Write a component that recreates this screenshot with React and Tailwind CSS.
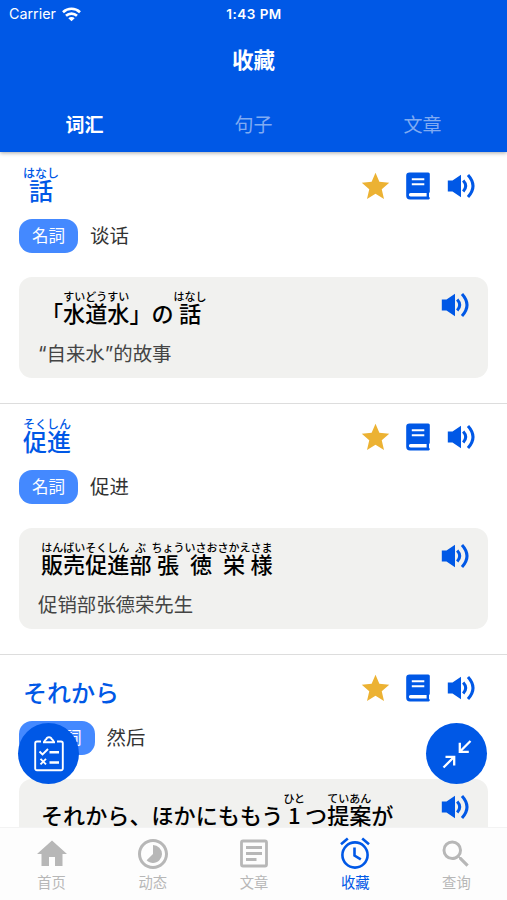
import React, { useState } from "react";
import { MdHome, MdTimelapse, MdSearch, MdStar } from "react-icons/md";

const words = [
    {
        id: 1,
        title: [{ text: "話", ruby: "はなし" }],
        type: "名詞",
        meaning: "谈话",
        example: [
            { text: "「" },
            { text: "水道水", ruby: "すいどうすい" },
            { text: "」の" },
            { text: "話", ruby: "はなし" },
        ],
        translation: "“自来水”的故事",
    },
    {
        id: 2,
        title: [{ text: "促進", ruby: "そくしん" }],
        type: "名詞",
        meaning: "促进",
        example: [
            { text: "販売促進", ruby: "はんばいそくしん" },
            { text: "部", ruby: "ぶ" },
            { text: "張", ruby: "ちょう" },
            { text: "徳", ruby: "いさお" },
            { text: "栄", ruby: "さかえ" },
            { text: "様", ruby: "さま" },
        ],
        translation: "促销部张德荣先生",
    },
    {
        id: 3,
        title: [{ text: "それから" }],
        type: "接続詞",
        meaning: "然后",
        example: [
            { text: "それから、ほかにももう" },
            { text: "1", ruby: "ひと" },
            { text: "つ" },
            { text: "提案", ruby: "ていあん" },
            { text: "が" },
        ],
        translation: "",
    },
];

const tabs = ["词汇", "句子", "文章"];

const navItems = [
    { label: "首页", Icon: MdHome },
    { label: "动态", Icon: MdTimelapse },
    { label: "文章", Icon: ArticleIcon },
    { label: "收藏", Icon: AlarmIcon },
    { label: "查询", Icon: MdSearch },
];

function ArticleIcon({ className }) {
    return (
        <svg className={className} viewBox="0 0 36 36" fill="none" stroke="currentColor" strokeWidth="2.8">
            <rect x="5.500" y="5" width="25" height="25" rx="1.500" />
            <path d="M10 11.500h16M10 17.500h16M10 23.500h10.500" />
        </svg>
    );
}

function AlarmIcon({ className }) {
    return (
        <svg className={className} viewBox="0 0 36 36" fill="none" stroke="currentColor" strokeWidth="2.6">
            <circle cx="18" cy="19" r="12.600" />
            <path d="M17.500 11.500v8l6.300 3.800M4 8.300 10.800 2.500M32 8.300 25.200 2.500" />
        </svg>
    );
}

function WifiIcon() {
    return (
        <svg width="19" height="15" viewBox="0 0 19 15" fill="none" stroke="white" strokeWidth="2.6">
            <path d="M1 5.2a12.3 12.3 0 0 1 17 0" />
            <path d="M4 8.800a8 8 0 0 1 11 0" />
            <path d="M9.5 14.3 6.3 11.3a4.6 4.6 0 0 1 6.4 0z" fill="white" stroke="none" />
        </svg>
    );
}

function SpeakerIcon() {
    return (
        <svg width="28" height="26" viewBox="0 0 28 26" fill="none" stroke="#0058e6" strokeWidth="3">
            <path d="M.8 7.500H5.500L14 1.800v22.400L5.500 18.500H.8z" fill="#0058e6" stroke="none" />
            <path d="M16.2 7.500q5 5.500 0 11" />
            <path d="M21 2q10 11 0 22" />
        </svg>
    );
}

function BookIcon() {
    return (
        <svg width="24" height="28" viewBox="0 0 24 28">
            <path
                d="M3.500.5h18.800a1.500 1.500 0 0 1 1.500 1.500v17.700a1.300 1.300 0 0 1-.8 1.200v4a1.300 1.300 0 0 1-.3 2.500H4A3.800 3.800 0 0 1 .2 23.500V3.800A3.300 3.300 0 0 1 3.500.5z"
                fill="#0058e6"
            />
            <path d="M5.800 7.200h12.500M5.800 12.200h12.500" stroke="white" strokeWidth="2" />
            <path d="M4.600 21h16v3.500h-16a1.750 1.750 0 0 1 0-3.500z" fill="white" />
        </svg>
    );
}

function ClipboardIcon() {
    return (
        <svg width="30" height="36" viewBox="0 0 30 36" fill="none" stroke="white" strokeWidth="1.900">
            <path d="M7 5.500H3A1.800 1.800 0 0 0 1.200 7.300V32.500A1.800 1.800 0 0 0 3 34.300H27A1.800 1.800 0 0 0 28.800 32.500V7.300A1.800 1.800 0 0 0 27 5.500H23" />
            <path d="M9 6.200h12M10.500 5.500c0-1.800 1.500-1.600 1.900-2.500.5-2.400 4.700-2.400 5.200 0 .4.900 1.900.7 1.900 2.500" />
            <path d="m5.500 15.500 3 3 5.500-5.500M6.500 22.800l5.500 5.500M12 22.800l-5.500 5.500" />
            <path d="M15.500 16.200H25M15.500 26.500H25" strokeWidth="2.600" />
        </svg>
    );
}

function CollapseIcon() {
    return (
        <svg width="30" height="30" viewBox="0 0 30 30" fill="none" stroke="white" strokeWidth="2.300">
            <path d="M28.500 2 18.300 12.200M17.800 3.800v9h9" />
            <path d="M1.500 28.500 11.700 18.300M3.500 17.800h8.700v8.800" />
        </svg>
    );
}

function Furigana({ parts, big }) {
    return (
        <div className="flex items-end whitespace-nowrap font-['Noto_Sans_CJK_JP',sans-serif]">
            {parts.map((part, i) => (
                <div key={i} className="flex flex-col items-center">
                    {part.ruby && (
                        <span className={big ? "h-3 text-[12px] leading-3" : "h-[11px] text-[11px] leading-[11px]"}>
                            {part.ruby}
                        </span>
                    )}
                    <span className={big ? "text-[24px] leading-[22px]" : "text-[22.100px] leading-[21px]"}>
                        {part.text}
                    </span>
                </div>
            ))}
        </div>
    );
}

function WordItem({ word }) {
    return (
        <div className="h-[251px] shrink-0 border-b border-[#dddddd] px-[19px]">
            <div className="flex h-[65px] justify-between pl-1 pr-[13px]">
                <div className="flex h-12 items-end font-medium text-[#0058e6]">
                    <Furigana parts={word.title} big />
                </div>
                <div className="flex h-[66px] items-center">
                    <MdStar className="mr-[14px] size-[33px] text-[#ecb233]" />
                    <div className="mr-[17px]"><BookIcon /></div>
                    <SpeakerIcon />
                </div>
            </div>
            <div className="flex h-[35px] items-center">
                <span className="flex h-[34px] items-center rounded-[13px] bg-[#4489ff] px-[13px] text-[16.5px] text-white font-['Noto_Sans_CJK_JP',sans-serif]">
                    {word.type}
                </span>
                <span className="ml-3 pt-[3px] text-[19.4px] text-[#333333]">{word.meaning}</span>
            </div>
            <div className="mt-6 flex h-[101px] justify-between rounded-[13px] bg-[#f1f1ef] pr-[19px]">
                <div>
                    <div className="flex h-[46px] items-end pl-[22px] font-medium text-black">
                        <Furigana parts={word.example} />
                    </div>
                    <p className="mt-4 pl-[19px] text-[19.4px] leading-[30px] text-[#444444]">{word.translation}</p>
                </div>
                <div className="mt-[15px]"><SpeakerIcon /></div>
            </div>
        </div>
    );
}

function App() {
    const [tab, setTab] = useState(0);
    const [page, setPage] = useState(3);

    return (
        <div className="relative flex h-[900px] w-[507px] flex-col overflow-hidden bg-white font-[Inter,'Noto_Sans_CJK_SC',sans-serif]">
            <header className="z-10 h-[152px] shrink-0 bg-[#0058e6] text-white shadow-[0_1px_4px_rgba(0,0,0,0.35)]">
                <div className="grid h-7 grid-cols-3 items-center px-[9px]">
                    <div className="flex items-center gap-[6px] text-[14.300px]">
                        Carrier
                        <WifiIcon />
                    </div>
                    <div className="pl-px text-center text-[13.500px] font-semibold tracking-[0.5px]">1:43 PM</div>
                </div>
                <h1 className="flex h-[64px] items-center justify-center text-[21.500px] font-bold">收藏</h1>
                <div className="grid h-[60px] grid-cols-3 pt-2">
                    {tabs.map((name, i) => (
                        <button
                            key={name}
                            onClick={() => setTab(i)}
                            className={tab === i ? "text-[19px] font-bold" : "text-[19px] text-[#80abf2]"}
                        >
                            {name}
                        </button>
                    ))}
                </div>
            </header>

            <main className="flex h-[675px] shrink-0 flex-col overflow-hidden pt-px">
                {words.map((word) => (
                    <WordItem key={word.id} word={word} />
                ))}
            </main>

            <button className="absolute left-[18px] top-[723px] flex size-[61px] items-center justify-center rounded-full bg-[#0058e6]">
                <ClipboardIcon />
            </button>
            <button className="absolute left-[426px] top-[723px] flex size-[61px] items-center justify-center rounded-full bg-[#0058e6]">
                <CollapseIcon />
            </button>

            <nav className="z-10 grid h-[73px] shrink-0 grid-cols-5 border-t border-[#f3f3f3] bg-[#fdfdfd] pl-px">
                {navItems.map(({ label, Icon }, i) => (
                    <button
                        key={label}
                        onClick={() => setPage(i)}
                        className={
                            page === i
                                ? "flex flex-col items-center pt-2 text-[#0058e6]"
                                : "flex flex-col items-center pt-2 text-[#b7b7b7]"
                        }
                    >
                        <Icon className="size-9" />
                        <span className="mt-px text-[14.300px] leading-5">{label}</span>
                    </button>
                ))}
            </nav>
        </div>
    );
}

export default App;
